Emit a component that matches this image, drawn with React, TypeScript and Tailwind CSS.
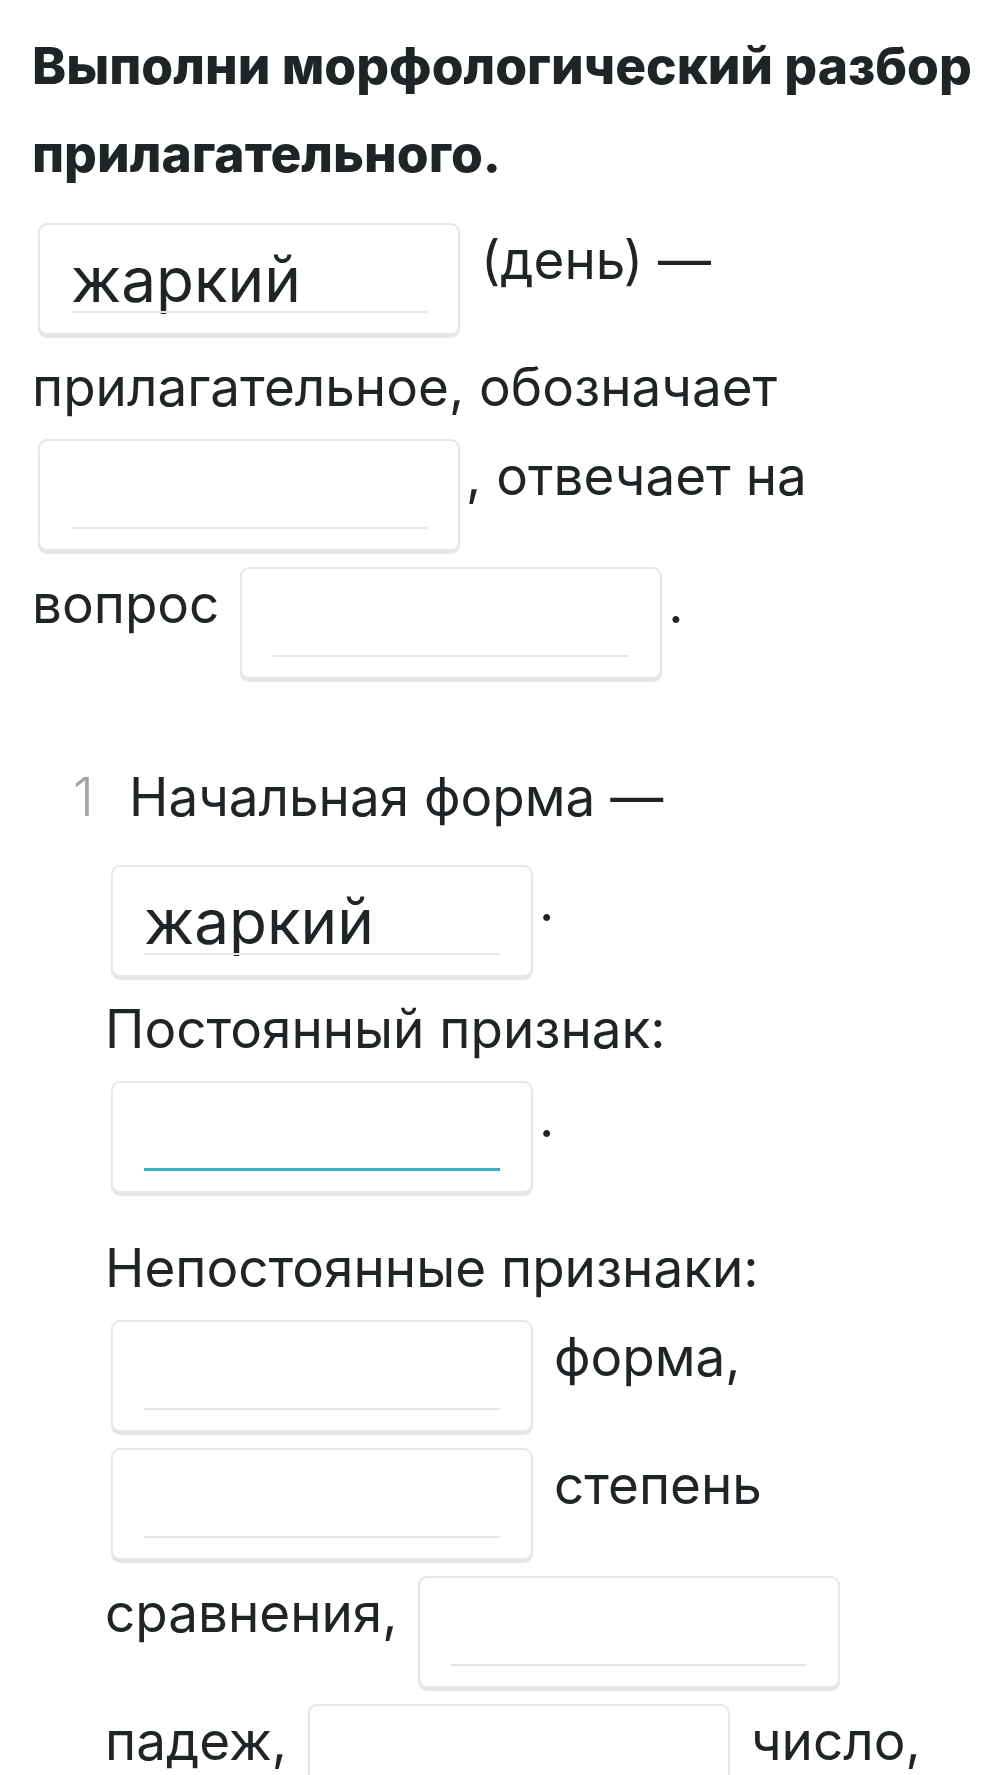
import React from "react";

function Blank({ value, active }: { value?: string; active?: boolean }) {
  return (
    <span className="inline-block overflow-hidden align-[-64px] mx-[6px] my-2 w-[422px] h-[112px] rounded-[9px] border-2 border-[#e7e7e3] bg-white shadow-[0_3px_1px_rgba(0,0,0,0.10)]">
      <span className="flex h-full flex-col justify-end px-[31px] pb-[20px]">
        <span className="block h-[56px] leading-[56px] text-[62px] text-[#1f2427] whitespace-nowrap">{value ?? "\u00a0"}</span>
        <span className={active ? "mt-[2px] block h-[3px] bg-[#3aafc2]" : "mt-[3px] block h-[2px] bg-[#e6e6e6]"} />
      </span>
    </span>
  );
}

export default function App() {
  return (
    <div className="min-h-screen bg-white pl-[32px] pr-[16px] pt-[21px] text-[#1f2427]" style={{ fontFamily: "Inter, 'Noto Sans', sans-serif" }}>
      <h1 className="text-[51.5px] font-extrabold leading-[88px]">Выполни морфологический разбор прилагательного.</h1>

      <p className="mt-[18px] text-[53px] leading-[88px]">
        <Blank value="жаркий" /> (день) — прилагательное, обозначает <Blank />, отвечает на вопрос <Blank />.
      </p>

      <div className="mt-[66px] pl-[73px] text-[53px] leading-[88px]">
        <p>
          <span className="-ml-[32px] inline-block w-[56px] font-light text-[#a3a3a3]">1</span>Начальная форма —
        </p>
        <p className="mt-[16px]">
          <Blank value="жаркий" />.
        </p>
        <p>
          Постоянный признак: <Blank active />.
        </p>
        <p className="mt-[23px]">
          Непостоянные признаки: <Blank /> форма, <Blank /> степень сравнения, <Blank /> падеж, <Blank /> число,
        </p>
      </div>
    </div>
  );
}
